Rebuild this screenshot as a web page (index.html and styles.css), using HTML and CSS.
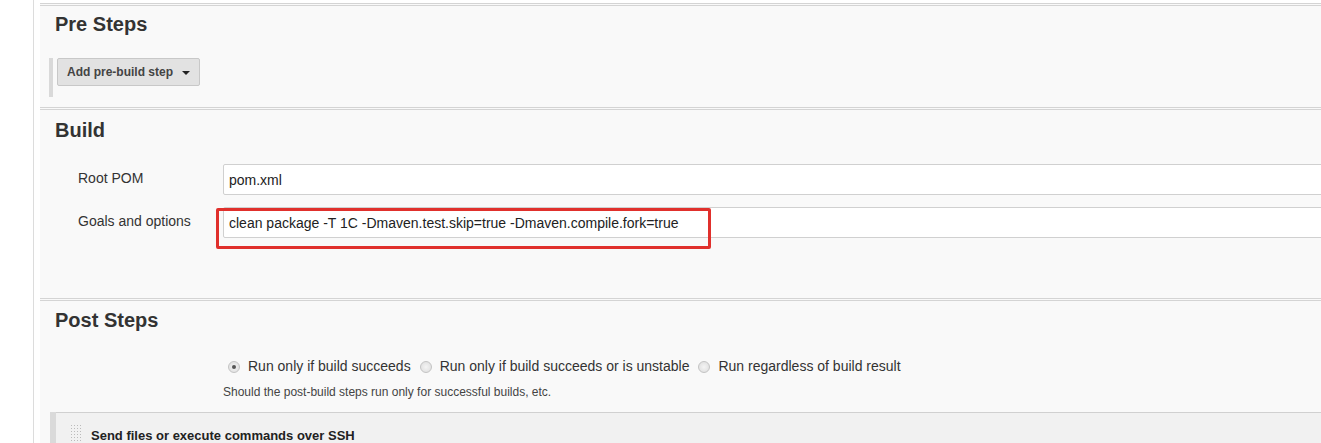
FILE: index.html
```html
<!DOCTYPE html>
<html lang="en">
  <head>
    <meta charset="UTF-8" />
    <meta name="viewport" content="width=device-width, initial-scale=1.0" />
    <title>Configure</title>
    <link rel="stylesheet" href="styles.css">
  </head>
  <body>
    <div class="page">
      <!-- Pre Steps -->
      <div class="section pre-steps">
        <h2>Pre Steps</h2>
        <div class="hetero-list">
          <button type="button" class="add-btn">Add pre-build step <span class="caret"></span></button>
        </div>
      </div>

      <!-- Build -->
      <div class="section build">
        <h2>Build</h2>
        <div class="row">
          <label class="row-label">Root POM</label>
          <div class="row-field">
            <input type="text" class="text-input" value="pom.xml" />
          </div>
        </div>
        <div class="row">
          <label class="row-label">Goals and options</label>
          <div class="row-field">
            <input type="text" class="text-input" value="clean package -T 1C -Dmaven.test.skip=true -Dmaven.compile.fork=true" />
            <div class="highlight"></div>
          </div>
        </div>
      </div>

      <!-- Post Steps -->
      <div class="section post-steps">
        <h2>Post Steps</h2>
        <div class="radio-row">
          <label class="radio"><span class="radio-dot checked"></span>Run only if build succeeds</label>
          <label class="radio"><span class="radio-dot"></span>Run only if build succeeds or is unstable</label>
          <label class="radio"><span class="radio-dot"></span>Run regardless of build result</label>
        </div>
        <div class="help">Should the post-build steps run only for successful builds, etc.</div>
        <div class="builder">
          <div class="builder-head">
            <span class="handle"></span>
            <span class="builder-title">Send files or execute commands over SSH</span>
          </div>
        </div>
      </div>
    </div>
  </body>
</html>
```

FILE: styles.css
```css
/* base */
html,
body {
  margin: 0;
  height: 100%;
  background: #fff;
  overflow: hidden;
}

body {
  font-family: "Liberation Sans", Arial, sans-serif;
  color: #333;
}

.page {
  margin-left: 33px;
  height: 100%;
  border-left: 1px solid #dcdcdc;
  padding: 3px 0 0 6px;
  background: #fff;
}

/* sections */
.section {
  border-top: 3px double #d4d4d4;
  background: #f9f9f9;
  padding: 6px 0 0 15px;
}

.section h2 {
  margin: 0;
  font-size: 20px;
  line-height: 24px;
  font-weight: bold;
  color: #333;
}

.pre-steps {
  height: 95px;
}

.build {
  height: 180px;
  padding-top: 8px;
}

.post-steps {
  padding-top: 7px;
  height: 200px;
}

/* add step button */
.hetero-list {
  margin: 22px 0 0 -6px;
  border-left: 4px solid #d9d9d9;
  padding-left: 4px;
  height: 39px;
}

.add-btn {
  height: 28px;
  padding: 0 9px;
  border: 1px solid #c8c8c8;
  border-radius: 2px;
  background: #e2e2e2;
  font-family: "Liberation Sans", Arial, sans-serif;
  font-size: 12px;
  font-weight: bold;
  color: #444;
}

.caret {
  display: inline-block;
  margin-left: 6px;
  vertical-align: middle;
  border-left: 4px solid transparent;
  border-right: 4px solid transparent;
  border-top: 4px solid #222;
}

/* form rows */
.row {
  display: flex;
  margin-top: 12px;
}

.build .row:first-of-type {
  margin-top: 22px;
}

.row-label {
  flex: 0 0 168px;
  box-sizing: border-box;
  padding: 6px 0 0 23px;
  font-size: 14px;
  line-height: 16px;
}

.row-field {
  position: relative;
}

.text-input {
  width: 1200px;
  height: 31px;
  box-sizing: border-box;
  border: 1px solid #d0d0d0;
  border-radius: 2px;
  background: #fff;
  padding: 0 5px;
  font-family: "Liberation Sans", Arial, sans-serif;
  font-size: 14px;
  color: #222;
}

.highlight {
  position: absolute;
  left: -7px;
  top: 1px;
  width: 495px;
  height: 41px;
  box-sizing: border-box;
  border: 3px solid #e0302c;
  border-radius: 2px;
}

/* radios */
.radio-row {
  display: flex;
  margin: 25px 0 0 173px;
  font-size: 14px;
  line-height: 18px;
}

.radio {
  display: flex;
  align-items: center;
  margin-right: 9px;
}

.radio-dot {
  width: 10px;
  height: 10px;
  margin-right: 8px;
  margin-top: 2px;
  border: 1px solid #c4c4c4;
  border-radius: 50%;
  background: radial-gradient(circle, #f4f4f4, #dcdcdc);
  position: relative;
}

.radio-dot.checked::after {
  content: "";
  position: absolute;
  left: 3px;
  top: 3px;
  width: 4px;
  height: 4px;
  border-radius: 50%;
  background: #555;
}

.help {
  margin: 10px 0 0 168px;
  font-size: 12px;
  line-height: 14px;
  color: #444;
}

/* ssh builder */
.builder {
  margin: 13px 0 0 -5px;
  border-left: 6px solid #dadada;
  height: 40px;
}

.builder-head {
  display: flex;
  align-items: center;
  height: 40px;
  border-top: 1px solid #d0d0d0;
  background: #f1f1f1;
  padding-left: 14px;
}

.handle {
  width: 11px;
  height: 30px;
  margin-top: 12px;
  background-image: radial-gradient(circle, #bbb 0.8px, transparent 1px);
  background-size: 3px 3px;
}

.builder-title {
  margin: 4px 0 0 10px;
  font-size: 13px;
  font-weight: bold;
  color: #222;
}
```
